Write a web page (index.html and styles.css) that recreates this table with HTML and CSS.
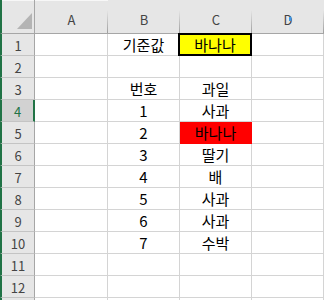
FILE: index.html
```html
<!DOCTYPE html>
<html lang="ko">
<head>
<meta charset="utf-8">
<title>시트</title>
<link rel="stylesheet" href="styles.css">
</head>
<body>
<div class="sheet">
  <div class="corner top-strip"><span class="tri"></span></div>
  <div class="colhead top-strip">A</div>
  <div class="colhead">B</div>
  <div class="colhead">C</div>
  <div class="colhead">D</div>

  <div class="rowhead">1</div><div class="cell"></div><div class="cell">기준값</div><div class="cell key">바나나</div><div class="cell"></div>
  <div class="rowhead">2</div><div class="cell"></div><div class="cell"></div><div class="cell"></div><div class="cell"></div>
  <div class="rowhead">3</div><div class="cell"></div><div class="cell">번호</div><div class="cell">과일</div><div class="cell"></div>
  <div class="rowhead active">4</div><div class="cell"></div><div class="cell">1</div><div class="cell">사과</div><div class="cell"></div>
  <div class="rowhead">5</div><div class="cell"></div><div class="cell">2</div><div class="cell hit">바나나</div><div class="cell"></div>
  <div class="rowhead">6</div><div class="cell"></div><div class="cell">3</div><div class="cell">딸기</div><div class="cell"></div>
  <div class="rowhead">7</div><div class="cell"></div><div class="cell">4</div><div class="cell">배</div><div class="cell"></div>
  <div class="rowhead">8</div><div class="cell"></div><div class="cell">5</div><div class="cell">사과</div><div class="cell"></div>
  <div class="rowhead">9</div><div class="cell"></div><div class="cell">6</div><div class="cell">사과</div><div class="cell"></div>
  <div class="rowhead">10</div><div class="cell"></div><div class="cell">7</div><div class="cell">수박</div><div class="cell"></div>
  <div class="rowhead">11</div><div class="cell"></div><div class="cell"></div><div class="cell"></div><div class="cell"></div>
  <div class="rowhead">12</div><div class="cell"></div><div class="cell"></div><div class="cell"></div><div class="cell"></div>
  <div class="rowhead"></div><div class="cell"></div><div class="cell"></div><div class="cell"></div><div class="cell"></div>
</div>
<span class="marker"></span>
</body>
</html>
```

FILE: styles.css
```css
html, body {
  margin: 0;
  padding: 0;
  background: #ffffff;
  overflow: hidden;
  height: 300px;
}

.sheet {
  display: grid;
  grid-template-columns: 35px 73px 72px 72px 72px;
  grid-template-rows: 34px;
  grid-auto-rows: 22px;
  width: 324px;
  height: 300px;
  overflow: hidden;
  font-family: "Noto Sans CJK KR", "Noto Sans", sans-serif;
  color: #000;
}

.sheet > div {
  box-sizing: border-box;
  display: flex;
  align-items: center;
  justify-content: center;
  overflow: hidden;
}

/* headers */
.corner,
.colhead,
.rowhead {
  background: #e6e6e6;
  color: #444444;
  font-size: 13px;
  line-height: 13px;
}

.top-strip {
  background: linear-gradient(#f7f7f7 0 1px, #e6e6e6 1px);
}

.corner {
  border-left: 2px solid #217346;
  border-right: 1px solid #a6a6a6;
  border-bottom: 1px solid #a6a6a6;
  justify-content: flex-end !important;
  align-items: flex-end !important;
  padding: 0 2px 4px 0;
}

.tri {
  display: block;
  width: 15px;
  height: 16px;
  background: #b4b4b4;
  clip-path: polygon(100% 0, 100% 100%, 0 100%);
}

.colhead {
  position: relative;
  padding-top: 6px;
  border-bottom: 1px solid #a6a6a6;
}

.colhead::after {
  content: "";
  position: absolute;
  right: 0;
  top: 10px;
  bottom: 0;
  width: 1px;
  background: linear-gradient(rgba(158, 158, 158, 0), #9e9e9e);
}

.rowhead {
  border-left: 2px solid #217346;
  border-right: 1px solid #a6a6a6;
  border-bottom: 1px solid #c4c4c4;
  padding-top: 1px;
}

.rowhead.active {
  background: #d2d2d2;
  color: #217346;
  border-right: 2px solid #217346;
}

/* cells */
.cell {
  border-right: 1px solid #d4d4d4;
  border-bottom: 1px solid #d4d4d4;
  font-size: 15px;
  line-height: 15px;
}

.cell.key {
  background: #ffff00;
  border: 2px solid #000;
  margin: -1px 0 0 -2px;
  height: 23px;
  position: relative;
  z-index: 1;
}

.cell.hit {
  background: #ff0000;
  border-color: #ff0000;
}

/* small blue mark in the header band */
.marker {
  position: absolute;
  left: 289px;
  top: 17px;
  width: 2px;
  height: 4px;
  background: #3d9be9;
}
```
